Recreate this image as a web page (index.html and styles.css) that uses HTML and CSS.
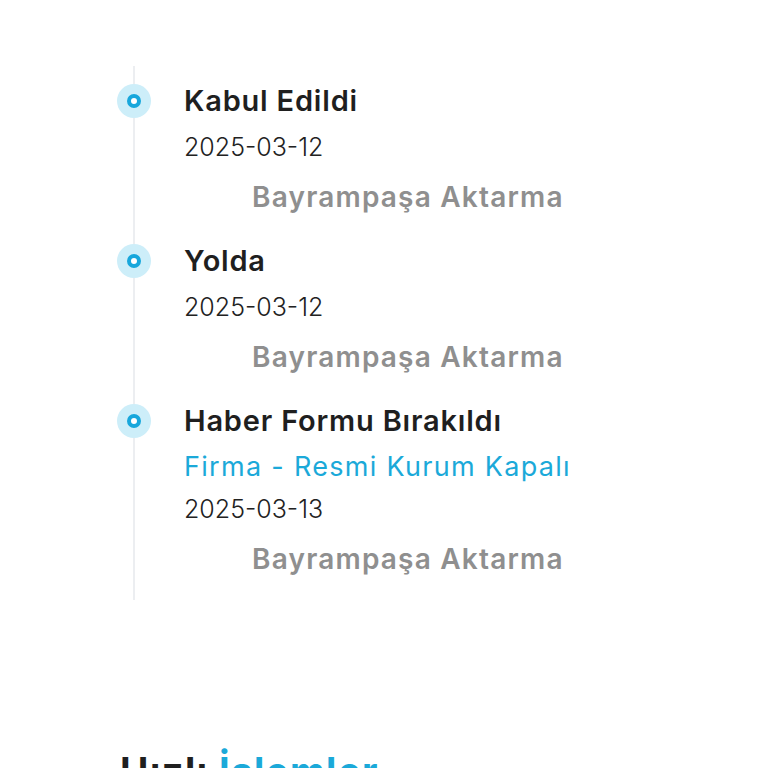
FILE: index.html
```html
<!DOCTYPE html>
<html lang="tr">
<head>
<meta charset="utf-8">
<link rel="stylesheet" href="styles.css">
</head>
<body>
<div class="page">
  <ul class="timeline">
    <li class="item">
      <span class="dot"></span>
      <div class="title">Kabul Edildi</div>
      <div class="date">2025-03-12</div>
      <div class="loc">Bayrampaşa Aktarma</div>
    </li>
    <li class="item">
      <span class="dot"></span>
      <div class="title">Yolda</div>
      <div class="date">2025-03-12</div>
      <div class="loc">Bayrampaşa Aktarma</div>
    </li>
    <li class="item">
      <span class="dot"></span>
      <div class="title">Haber Formu Bırakıldı</div>
      <div class="sub">Firma - Resmi Kurum Kapalı</div>
      <div class="date date-tight">2025-03-13</div>
      <div class="loc">Bayrampaşa Aktarma</div>
    </li>
  </ul>
  <h2 class="section-title">Hızlı <span class="accent">İşlemler</span></h2>
</div>
</body>
</html>
```

FILE: styles.css
```css
html, body {
  margin: 0;
  padding: 0;
  background: #ffffff;
}
body {
  font-family: Inter, "Noto Sans", sans-serif;
  color: #222222;
  width: 768px;
  height: 768px;
  overflow: hidden;
}
.page {
  padding-top: 66px;
}
.timeline {
  list-style: none;
  margin: 0 0 0 133px;
  padding: 17px 0 23px 0;
  border-left: 2px solid #eceef1;
}
.item {
  position: relative;
  padding-left: 49px;
  margin-bottom: 28px;
}
.item:last-child {
  margin-bottom: 0;
}
.dot {
  position: absolute;
  left: -18px;
  top: 1px;
  width: 34px;
  height: 34px;
  border-radius: 50%;
  background: #cdeef9;
  display: flex;
  align-items: center;
  justify-content: center;
}
.dot::after {
  content: "";
  width: 6px;
  height: 6px;
  border-radius: 50%;
  border: 4px solid #17a7dc;
  background: #ffffff;
}
.title {
  font-size: 29px;
  font-weight: 600;
  line-height: 36px;
  color: #1f1f1f;
  letter-spacing: 0.8px;
  white-space: nowrap;
}
.date {
  margin-top: 8px;
  font-size: 25px;
  font-weight: 300;
  line-height: 40px;
  color: #222222;
  white-space: nowrap;
}
.date-tight {
  margin-top: 4px;
}
.sub {
  margin-top: 10px;
  font-size: 27px;
  font-weight: 400;
  line-height: 36px;
  color: #1ba9d9;
  letter-spacing: 1.3px;
  white-space: nowrap;
}
.loc {
  margin-top: 12px;
  padding-left: 68px;
  font-size: 28px;
  font-weight: 600;
  line-height: 36px;
  color: #8f8f8f;
  letter-spacing: 1.2px;
  white-space: nowrap;
}
.section-title {
  margin: 149px 0 0 120px;
  font-size: 38px;
  font-weight: 700;
  line-height: 44px;
  color: #1f1f1f;
  letter-spacing: 1.5px;
  white-space: nowrap;
}
.accent {
  color: #1ba9d9;
}
```
